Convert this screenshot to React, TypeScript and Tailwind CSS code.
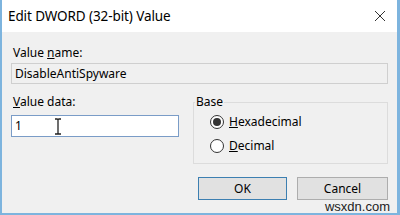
export default function App() {
  return (
    <div className="w-[400px] h-[215px] overflow-hidden bg-[#f0f0f0] font-['Noto_Sans','Open_Sans',sans-serif] text-[12px] text-[#000] relative">
      <div className="flex flex-col h-full border-l-2 border-r-[3px] border-b-2 border-[#7db4de]">
        {/* title bar */}
        <div className="h-[32px] bg-white flex items-center justify-between pl-[6px] pr-[10px]">
          <span className="text-[13.5px] tracking-[-0.1px]">Edit DWORD (32-bit) Value</span>
          <svg width="12" height="12" viewBox="0 0 12 12" className="mr-[1px]">
            <path d="M1 1 L11 11 M11 1 L1 11" stroke="#333" strokeWidth="1" />
          </svg>
        </div>

        {/* body */}
        <div className="flex-1 px-[9px] pt-[13px]">
          <div className="leading-[16px] pl-[2px]">
            Value <span className="underline">n</span>ame:
          </div>
          <div className="mt-[2px] h-[21px] border border-[#cfcfcf] bg-[#f0f0f0] flex items-center pl-[3px]">
            DisableAntiSpyware
          </div>

          <div className="flex mt-[10px] gap-[14px]">
            <div className="w-[168px]">
              <div className="leading-[16px] pl-[2px]">
                <span className="underline">V</span>alue data:
              </div>
              <div className="mt-[5px] h-[22px] border border-[#7a9cc7] bg-white flex items-center pl-[3px] relative">
                1
                <svg width="8" height="17" viewBox="0 0 8 17" className="absolute left-[42px] top-[2px]">
                  <path d="M1 1 H3 Q4 1 4 2 V15 Q4 16 3 16 H1 M7 1 H5 Q4 1 4 2 M4 15 Q4 16 5 16 H7" stroke="#222" strokeWidth="1.3" fill="none" />
                </svg>
              </div>
            </div>

            <div className="flex-1 relative pt-[8px]">
              <div className="border border-[#dcdcdc] h-[62px] pt-[10px] pl-[16px] flex flex-col gap-[7px]">
                <div className="flex items-center gap-[5px] h-[17px]">
                  <span className="w-[14px] h-[14px] rounded-full border border-[#333] bg-white flex items-center justify-center">
                    <span className="w-[8px] h-[8px] rounded-full bg-[#333]" />
                  </span>
                  <span>
                    <span className="underline">H</span>exadecimal
                  </span>
                </div>
                <div className="flex items-center gap-[5px] h-[17px]">
                  <span className="w-[14px] h-[14px] rounded-full border border-[#333] bg-white" />
                  <span>
                    <span className="underline">D</span>ecimal
                  </span>
                </div>
              </div>
              <span className="absolute left-[2px] top-0 px-[1px] leading-[16px] bg-[#f0f0f0]">Base</span>
            </div>
          </div>

          <div className="flex justify-end gap-[10px] mt-[13px]">
            <button className="w-[89px] h-[23px] border border-[#3c7fb1] bg-[#e1e1e1] text-[12px]">OK</button>
            <button className="w-[91px] h-[23px] border border-[#adadad] bg-[#e1e1e1] text-[12px]">Cancel</button>
          </div>
        </div>
      </div>
      <span className="absolute right-[10px] bottom-[1px] text-[13px] leading-[15px] text-[#222] font-['Liberation_Sans',sans-serif]">wsxdn.com</span>
    </div>
  );
}
